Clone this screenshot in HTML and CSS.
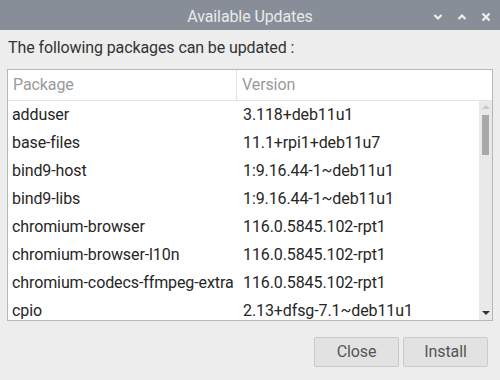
FILE: index.html
```html
<!DOCTYPE html>
<html>
<head>
<meta charset="utf-8">
<link rel="stylesheet" href="styles.css">
</head>
<body>
<div class="window">
  <div class="titlebar">
    <div class="title-spacer"></div>
    <div class="title">Available Updates</div>
    <div class="controls">
      <svg class="ctl" width="10" height="8" viewBox="0 0 10 8"><path d="M1.5 2 L5 5.5 L8.5 2" fill="none" stroke="#f0f0f0" stroke-width="2.2"/></svg>
      <svg class="ctl" width="10" height="8" viewBox="0 0 10 8"><path d="M1.5 6 L5 2.5 L8.5 6" fill="none" stroke="#f0f0f0" stroke-width="2.2"/></svg>
      <svg class="ctl" width="10" height="10" viewBox="0 0 10 10"><path d="M1.5 1.5 L8.5 8.5 M8.5 1.5 L1.5 8.5" fill="none" stroke="#f0f0f0" stroke-width="2.2"/></svg>
    </div>
  </div>
  <div class="content">
    <div class="label">The following packages can be updated :</div>
    <div class="list">
      <div class="list-head">
        <div class="hcell first">Package</div>
        <div class="hcell">Version</div>
      </div>
      <div class="list-body">
        <div class="rows">
          <div class="row"><div class="cell">adduser</div><div class="cell ver">3.118+deb11u1</div></div>
          <div class="row"><div class="cell">base-files</div><div class="cell ver">11.1+rpi1+deb11u7</div></div>
          <div class="row"><div class="cell">bind9-host</div><div class="cell ver">1:9.16.44-1~deb11u1</div></div>
          <div class="row"><div class="cell">bind9-libs</div><div class="cell ver">1:9.16.44-1~deb11u1</div></div>
          <div class="row"><div class="cell">chromium-browser</div><div class="cell ver">116.0.5845.102-rpt1</div></div>
          <div class="row"><div class="cell">chromium-browser-l10n</div><div class="cell ver">116.0.5845.102-rpt1</div></div>
          <div class="row"><div class="cell">chromium-codecs-ffmpeg-extra</div><div class="cell ver">116.0.5845.102-rpt1</div></div>
          <div class="row"><div class="cell">cpio</div><div class="cell ver">2.13+dfsg-7.1~deb11u1</div></div>
        </div>
        <div class="scrollbar">
          <div class="arrow up"></div>
          <div class="thumb"></div>
          <div class="track-fill"></div>
          <div class="arrow down"></div>
        </div>
      </div>
    </div>
    <div class="buttons">
      <div class="btn">Close</div>
      <div class="btn">Install</div>
    </div>
  </div>
</div>
</body>
</html>
```

FILE: styles.css
```css
html, body {
  margin: 0;
  padding: 0;
}
body {
  width: 500px;
  height: 380px;
  overflow: hidden;
  background: #ededed;
  font-family: Roboto, "Liberation Sans", sans-serif;
  font-size: 16px;
  letter-spacing: -0.1px;
}
.window {
  display: flex;
  flex-direction: column;
  height: 380px;
}
.titlebar {
  height: 30px;
  flex: none;
  background: #878e98;
  display: grid;
  grid-template-columns: 1fr auto 1fr;
  align-items: center;
}
.title {
  color: #e9eaec;
  font-size: 16px;
  line-height: 30px;
  padding-top: 2px;
}
.controls {
  display: flex;
  justify-content: flex-end;
  align-items: center;
  gap: 14px;
  padding-right: 9px;
  padding-top: 1px;
}
.ctl {
  display: block;
}
.content {
  display: flex;
  flex-direction: column;
  padding: 0 7px;
}
.label {
  margin: 8px 1px 11px;
  line-height: 20px;
  color: #333;
}
.list {
  height: 250px;
  border: 1px solid #b7b7b7;
  background: #fff;
  display: flex;
  flex-direction: column;
  overflow: hidden;
}
.list-head {
  display: grid;
  grid-template-columns: 229px 1fr;
  height: 30px;
  flex: none;
  border-bottom: 1px solid #e2e2e2;
}
.hcell {
  color: #9a9a9a;
  line-height: 30px;
  padding-left: 5px;
}
.hcell.first {
  border-right: 1px solid #e2e2e2;
}
.list-body {
  flex: 1;
  display: flex;
  min-height: 0;
}
.rows {
  flex: 1;
  overflow: hidden;
}
.row {
  display: grid;
  grid-template-columns: 230px 1fr;
  height: 28px;
  line-height: 28px;
  color: #262626;
}
.cell {
  padding-left: 4px;
  white-space: nowrap;
}
.cell.ver {
  padding-left: 5px;
}
.scrollbar {
  width: 13px;
  flex: none;
  background: #e9e9e9;
  display: flex;
  flex-direction: column;
  align-items: center;
}
.arrow {
  width: 0;
  height: 0;
  border-left: 4px solid transparent;
  border-right: 4px solid transparent;
}
.arrow.up {
  margin-top: 4px;
  border-bottom: 4px solid #c9c9c9;
}
.arrow.down {
  margin-bottom: 5px;
  border-top: 4px solid #333;
}
.thumb {
  margin-top: 6px;
  width: 7px;
  height: 40px;
  background: #a9a9a9;
}
.track-fill {
  flex: 1;
}
.buttons {
  display: flex;
  justify-content: flex-end;
  gap: 4px;
  margin-top: 16px;
  padding-right: 5px;
}
.btn {
  width: 83px;
  height: 28px;
  line-height: 28px;
  text-align: center;
  background: #e2e2e2;
  border: 1px solid #cacaca;
  border-radius: 2px;
  color: #555;
}
```
